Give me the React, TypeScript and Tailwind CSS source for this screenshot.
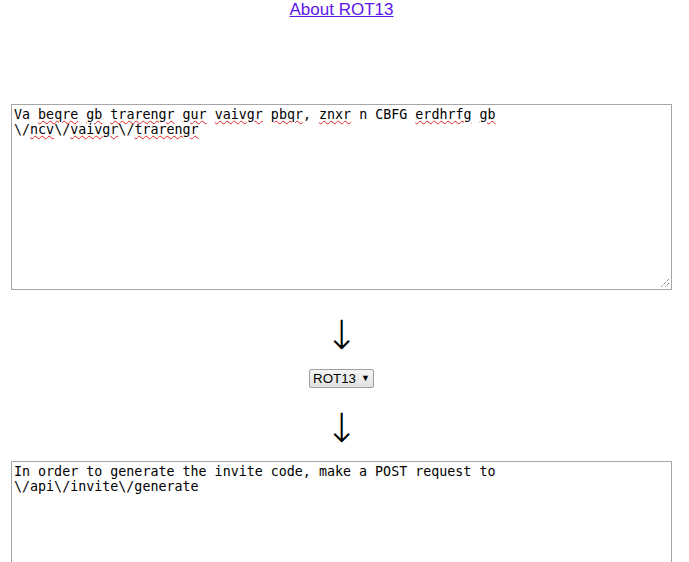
import React from "react";

const words: { t: string; s?: boolean }[] = [
  { t: "Va " },
  { t: "beqre", s: true },
  { t: " " },
  { t: "gb", s: true },
  { t: " " },
  { t: "trarengr", s: true },
  { t: " " },
  { t: "gur", s: true },
  { t: " " },
  { t: "vaivgr", s: true },
  { t: " " },
  { t: "pbqr", s: true },
  { t: ", " },
  { t: "znxr", s: true },
  { t: " n CBFG " },
  { t: "erdhrfg", s: true },
  { t: " " },
  { t: "gb", s: true },
  { t: " \\/" },
  { t: "ncv", s: true },
  { t: "\\/" },
  { t: "vaivgr", s: true },
  { t: "\\/" },
  { t: "trarengr", s: true },
];

function Squiggle({ children }: { children: React.ReactNode }) {
  return (
    <span className="underline decoration-wavy decoration-[#e02020] decoration-1 underline-offset-[1px]">
      {children}
    </span>
  );
}

export default function App() {
  return (
    <div className="w-[689px] h-[562px] overflow-hidden bg-white text-black">
      <div className="w-[683px]">
        <div className="h-[104px] text-center text-[17px] leading-[19px] [font-family:'Liberation_Sans',Arial,sans-serif]">
          <a href="#" className="underline text-[#5b16ee]">
            About ROT13
          </a>
        </div>
        <div className="relative ml-[11px] w-[661px] h-[186px] border border-[#a6a6a6] px-[2px] pt-[2px] [font-family:'DejaVu_Sans_Mono',monospace] text-[13.33px] leading-[15px] whitespace-pre-wrap break-words">
          {words.map((w, i) =>
            w.s ? <Squiggle key={i}>{w.t}</Squiggle> : <span key={i}>{w.t}</span>
          )}
          <svg
            className="absolute right-[1px] bottom-[1px]"
            width="10"
            height="10"
            viewBox="0 0 10 10"
          >
            <path d="M9 1 L1 9 M9 5 L5 9" stroke="#555" strokeWidth="1" strokeDasharray="1 1" fill="none" />
          </svg>
        </div>
        <div className="h-[79px] flex justify-center pt-[25px]">
          <span className="text-[40px] leading-[40px] [font-family:'DejaVu_Sans',sans-serif] font-extralight">
            ↓
          </span>
        </div>
        <div className="flex justify-center">
          <div className="h-[19px] w-[65px] flex items-center justify-center gap-[5px] border border-[#a0a0a0] rounded-[2px] bg-gradient-to-b from-[#f4f4f4] to-[#e2e2e2] text-[13.33px] [font-family:'Liberation_Sans',Arial,sans-serif]">
            <span>ROT13</span>
            <span className="text-[9px] leading-none">▼</span>
          </div>
        </div>
        <div className="h-[73px] flex justify-center pt-[20px]">
          <span className="text-[40px] leading-[40px] [font-family:'DejaVu_Sans',sans-serif] font-extralight">
            ↓
          </span>
        </div>
        <div className="ml-[11px] w-[661px] h-[186px] border border-[#a6a6a6] px-[2px] pt-[2px] [font-family:'DejaVu_Sans_Mono',monospace] text-[13.33px] leading-[15px] whitespace-pre-wrap break-words">
          In order to generate the invite code, make a POST request to \/api\/invite\/generate
        </div>
      </div>
    </div>
  );
}
